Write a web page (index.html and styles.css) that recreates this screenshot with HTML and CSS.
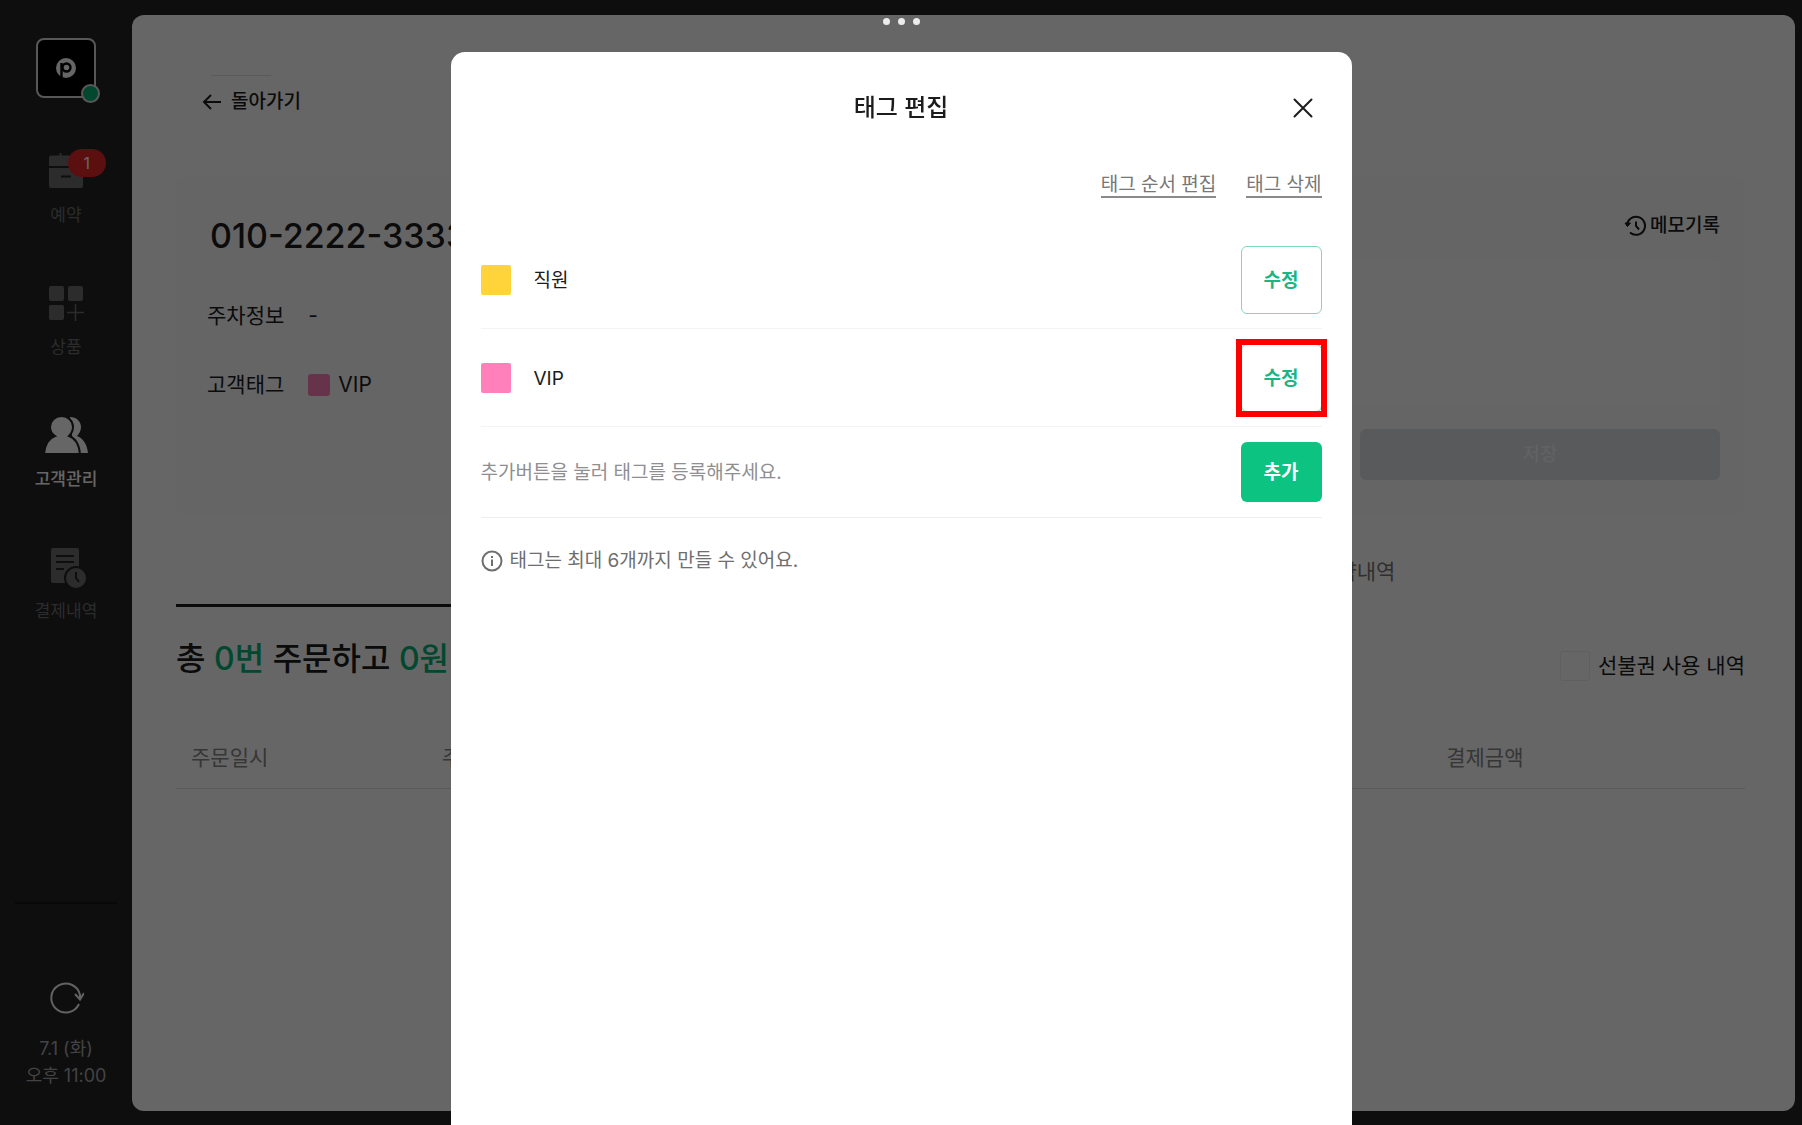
FILE: index.html
```html
<!DOCTYPE html>
<html lang="ko">
<head>
  <meta charset="UTF-8">
  <meta name="viewport" content="width=device-width, initial-scale=1.0">
  <title>고객관리 - 태그 편집</title>
  <link rel="stylesheet" href="styles.css">
</head>
<body>
  <div class="app">
    <aside class="sidebar">
      <div class="logo">
        <svg width="20" height="20" viewBox="0 0 20 20">
          <circle cx="10" cy="10" r="10" fill="#fff"/>
          <circle cx="10.500" cy="9.500" r="4" fill="none" stroke="#000" stroke-width="2.400"/>
          <path d="M5.500 5v15" stroke="#000" stroke-width="2.400"/>
        </svg>
        <span class="logo-status"></span>
      </div>

      <nav class="menu">
        <a href="#" class="menu-item">
          <svg width="44" height="44" viewBox="0 0 44 44" fill="currentColor">
            <path d="M5 17V8.500a2 2 0 0 1 2-2h8.500V4h2v2.500h10V4h2v2.500H37a2 2 0 0 1 2 2V17z"/>
            <path d="M5 19h34v18a2 2 0 0 1-2 2H7a2 2 0 0 1-2-2z"/>
            <path d="M17 27.500h10" stroke="#232323" stroke-width="2"/>
          </svg>
          <span>예약</span>
          <em class="menu-badge">1</em>
        </a>
        <a href="#" class="menu-item">
          <svg width="44" height="44" viewBox="0 0 44 44" fill="currentColor">
            <rect x="5" y="5" width="15" height="15" rx="2"/>
            <rect x="24" y="5" width="15" height="15" rx="2"/>
            <rect x="5" y="24" width="15" height="15" rx="2"/>
            <path d="M31.500 23v17M23 31.500h17" stroke="currentColor" stroke-width="1.500"/>
          </svg>
          <span>상품</span>
        </a>
        <a href="#" class="menu-item active">
          <svg width="44" height="44" viewBox="0 0 44 44" fill="currentColor">
            <path d="M26 4c6 0 11 4 11 10 0 4-2 7-4 9 6 2 10 8 11 17H30z"/>
            <path d="M17.500 3C24 3 29 8 29 14c0 4-2 7-4 9 6 2 10 8 11 18H0c1-10 5-16 11-18-3-2-5-5-5-9C6 8 11 3 17.500 3z" stroke="#232323" stroke-width="2"/>
          </svg>
          <span>고객관리</span>
        </a>
        <a href="#" class="menu-item">
          <svg width="44" height="44" viewBox="0 0 44 44" fill="currentColor">
            <rect x="7" y="3" width="28" height="35" rx="2"/>
            <path d="M12 11h18M12 17h18M12 24h8" stroke="#232323" stroke-width="2"/>
            <circle cx="32" cy="33" r="11" stroke="#232323" stroke-width="2"/>
            <path d="M32 27v6l3 4" fill="none" stroke="#232323" stroke-width="2"/>
          </svg>
          <span>결제내역</span>
        </a>
      </nav>

      <div class="sidebar-bottom">
        <button type="button" class="refresh" aria-label="새로고침">
          <svg width="36" height="36" viewBox="0 0 36 36" fill="none" stroke="currentColor" stroke-width="2">
            <path d="M31 24a14.500 14.500 0 1 1 1-9v3"/>
            <path d="M27 14l5 5.500L36 13"/>
          </svg>
        </button>
        <p>7.1 (화)</p>
        <p>오후 11:00</p>
      </div>
    </aside>

    <main class="page">
      <div class="page-top">
        <a href="#" class="back">
          <svg width="20" height="20" viewBox="0 0 20 20" fill="none" stroke="currentColor" stroke-width="2">
            <path d="M19 10H2M9 3l-7 7 7 7"/>
          </svg>
          돌아가기
        </a>
      </div>

      <section class="card">
        <div class="customer">
          <h1>010-2222-3333</h1>
          <dl>
            <div class="info-row"><dt>주차정보</dt><dd>-</dd></div>
            <div class="info-row"><dt>고객태그</dt><dd><span class="tag-dot"></span>VIP</dd></div>
          </dl>
        </div>
        <div class="memo">
          <button type="button" class="memo-log">
            <svg width="22" height="22" viewBox="0 0 22 22" fill="none" stroke="currentColor" stroke-width="2">
              <path d="M3 11a9 9 0 1 1 3 6.500"/>
              <path d="M1 8l2.500 3.500L6.500 8z" fill="currentColor" stroke-width="1"/>
              <path d="M12 6.500V11l3 3.500"/>
            </svg>
            메모기록
          </button>
          <textarea aria-label="메모"></textarea>
          <button type="button" class="memo-save">저장</button>
        </div>
      </section>

      <div class="tabs">
        <button type="button" class="tab active" aria-label="주문내역"></button>
        <button type="button" class="tab">예약내역</button>
      </div>

      <div class="summary">
        <h2>총 <b>0번</b> 주문하고 <b>0원</b></h2>
        <label class="prepaid"><input type="checkbox">선불권 사용 내역</label>
      </div>

      <table class="orders">
        <thead>
          <tr>
            <th class="col-date">주문일시</th>
            <th>주문상품</th>
            <th class="col-price">결제금액</th>
          </tr>
        </thead>
      </table>
    </main>
  </div>

  <div class="overlay">
    <div class="window-dots"><i></i><i></i><i></i></div>
    <div class="modal" role="dialog" aria-modal="true" aria-labelledby="modalTitle">
      <header class="modal-header">
        <h2 id="modalTitle">태그 편집</h2>
        <button type="button" class="modal-close" aria-label="닫기">
          <svg width="20" height="20" viewBox="0 0 20 20" fill="none" stroke="currentColor" stroke-width="2" stroke-linecap="round">
            <path d="M1.500 1.500l17 17M18.500 1.500l-17 17"/>
          </svg>
        </button>
      </header>
      <div class="modal-links">
        <a href="#">태그 순서 편집</a>
        <a href="#">태그 삭제</a>
      </div>
      <ul class="tag-list">
        <li>
          <span class="swatch yellow"></span>
          <span class="tag-name">직원</span>
          <button type="button" class="btn-edit">수정</button>
        </li>
        <li>
          <span class="swatch pink"></span>
          <span class="tag-name">VIP</span>
          <button type="button" class="btn-edit marked">수정</button>
        </li>
        <li class="tag-new">
          <span class="tag-hint">추가버튼을 눌러 태그를 등록해주세요.</span>
          <button type="button" class="btn-add">추가</button>
        </li>
      </ul>
      <p class="notice">
        <svg width="22" height="22" viewBox="0 0 22 22" fill="none" stroke="currentColor" stroke-width="2">
          <circle cx="11" cy="11" r="9.500"/>
          <path d="M11 9.500V16M11 6v2"/>
        </svg>
        태그는 최대 6개까지 만들 수 있어요.
      </p>
    </div>
  </div>
</body>
</html>
```
FILE: styles.css
```css
* { box-sizing: border-box; margin: 0; padding: 0; }
body { font-family: Inter, "Noto Sans CJK KR", sans-serif; font-size: 19px; line-height: 24px; color: #1c1c1c; background: #232323; }
button { font: inherit; color: inherit; background: none; border: 0; cursor: pointer; }
a { color: inherit; text-decoration: none; }
ul { list-style: none; }
svg { display: block; flex: none; }

.app { display: flex; min-height: 100vh; }

/* sidebar */
.sidebar { width: 132px; flex: none; display: flex; flex-direction: column; align-items: center; padding: 38px 15px 36px; font-size: 17px; }
.logo { position: relative; width: 60px; height: 60px; display: flex; align-items: center; justify-content: center; background: #000; border: 2px solid #dcdcdc; border-radius: 8px; }
.logo-status { position: absolute; right: -6px; bottom: -7px; width: 19px; height: 19px; background: #07b477; border: 2px solid #dcdcdc; border-radius: 50%; }
.menu { margin-top: 51px; display: flex; flex-direction: column; gap: 54px; }
.menu-item { position: relative; display: flex; flex-direction: column; align-items: center; gap: 10px; color: #6e6e70; }
.menu-item.active { color: #fff; font-weight: 500; }
.menu-badge { position: absolute; left: 33px; top: 0; width: 38px; height: 28px; line-height: 28px; border-radius: 14px; background: #e32626; color: #fff; text-align: center; font-style: normal; font-size: 16px; }
.sidebar-bottom { margin-top: auto; width: 100%; display: flex; flex-direction: column; align-items: center; border-top: 2px solid #151515; padding-top: 76px; font-size: 18px; line-height: 27px; color: #a8a8ac; }
.refresh { margin-bottom: 19px; color: #f4f4f4; }

/* customer page */
.page { flex: 1; margin: 15px 7px 14px 0; padding: 60px 50px 0 44px; background: #fff; border-radius: 12px; }
.page-top { padding-left: 26px; }
.page-top::before { content: ""; display: block; width: 60px; height: 1px; margin-left: 9px; background: #e4e4e4; }
.back { display: inline-flex; align-items: center; gap: 9px; margin-top: 14px; font-weight: 500; }
.card { margin-top: 59px; min-height: 336px; padding: 37px 25px 34px 31px; display: grid; grid-template-columns: 1fr 1fr; gap: 44px; background: #fcfcfc; border-radius: 8px; }
.customer h1 { padding-left: 3px; font-size: 34px; line-height: 44px; font-weight: 500; }
.customer dl { margin-top: 44px; font-size: 21px; line-height: 28px; }
.info-row { display: flex; gap: 24px; margin-bottom: 41px; }
.info-row dd { display: flex; align-items: center; gap: 8px; }
.tag-dot { width: 22px; height: 22px; border-radius: 3px; background: #ff80bb; }
.memo { display: flex; flex-direction: column; align-items: flex-end; }
.memo-log { display: flex; align-items: center; gap: 4px; font-weight: 500; }
.memo textarea { width: 100%; height: 146px; margin-top: 22px; border: 0; border-radius: 6px; background: #fff; resize: none; }
.memo-save { width: 49%; height: 51px; margin-top: 23px; border-radius: 6px; background: #dfe1e4; color: #f4f4f4; font-weight: 500; }

.tabs { display: flex; gap: 16px; margin-top: 23px; }
.tab { flex: 1; height: 70px; padding-top: 3px; border-bottom: 3px solid transparent; font-size: 21px; color: #777; }
.tab.active { color: #222; border-bottom-color: #1c1c1c; }
.summary { display: flex; justify-content: space-between; align-items: flex-end; margin-top: 30px; }
.summary h2 { font-size: 32px; line-height: 44px; font-weight: 500; }
.summary b { color: #07b477; font-weight: 500; }
.prepaid { display: flex; align-items: center; gap: 8px; font-size: 21px; line-height: 30px; }
.prepaid input { appearance: none; width: 30px; height: 30px; border: 1px solid #ededed; border-radius: 3px; }
.orders { width: 100%; margin-top: 48px; border-collapse: collapse; table-layout: fixed; }
.orders th { height: 59px; padding: 0 15px; border-bottom: 1px solid #e0e0e0; text-align: left; font-size: 21px; font-weight: 400; color: #888; }
.col-date { width: 16%; }
.col-price { width: 20%; }

/* modal */
.overlay { position: fixed; inset: 0; display: flex; flex-direction: column; align-items: center; background: rgba(0,0,0,0.6); }
.window-dots { display: flex; gap: 8px; padding: 18px 0 27px; }
.window-dots i { width: 7px; height: 7px; border-radius: 50%; background: #ececec; }
.modal { flex: 1; width: 50%; padding: 0 30px; background: #fff; border-radius: 14px 14px 0 0; }
.modal-header { position: relative; padding-top: 40px; text-align: center; }
.modal-header h2 { font-size: 24px; line-height: 32px; font-weight: 500; }
.modal-close { position: absolute; right: 9px; bottom: 6px; }
.modal-links { display: flex; justify-content: flex-end; gap: 30px; margin-top: 50px; line-height: 22px; color: #777; }
.modal-links a { border-bottom: 2px solid #8a8a8a; }
.tag-list { margin-top: 33px; }
.tag-list li { display: flex; align-items: center; height: 98px; border-bottom: 1px solid #f4f4f5; }
.tag-list .tag-new { height: 91px; border-color: #eee; }
.swatch { width: 30px; height: 30px; margin-right: 23px; border-radius: 2px; }
.yellow { background: #ffd43a; }
.pink { background: #ff80bb; }
.tag-name, .tag-hint { flex: 1; padding-top: 2px; }
.tag-hint { color: #8f8f91; }
.btn-edit { position: relative; width: 81px; height: 68px; padding-top: 2px; border: 1px solid #82d8b8; border-radius: 6px; color: #1db583; font-weight: 700; }
.btn-edit.marked::after { content: ""; position: absolute; inset: -6px; border: 6px solid #f00; }
.btn-add { width: 81px; height: 60px; padding-top: 2px; border-radius: 6px; background: #0dc381; color: #fff; font-weight: 700; }
.notice { display: flex; align-items: center; gap: 7px; margin-top: 31px; color: #6e6e6e; }
```
